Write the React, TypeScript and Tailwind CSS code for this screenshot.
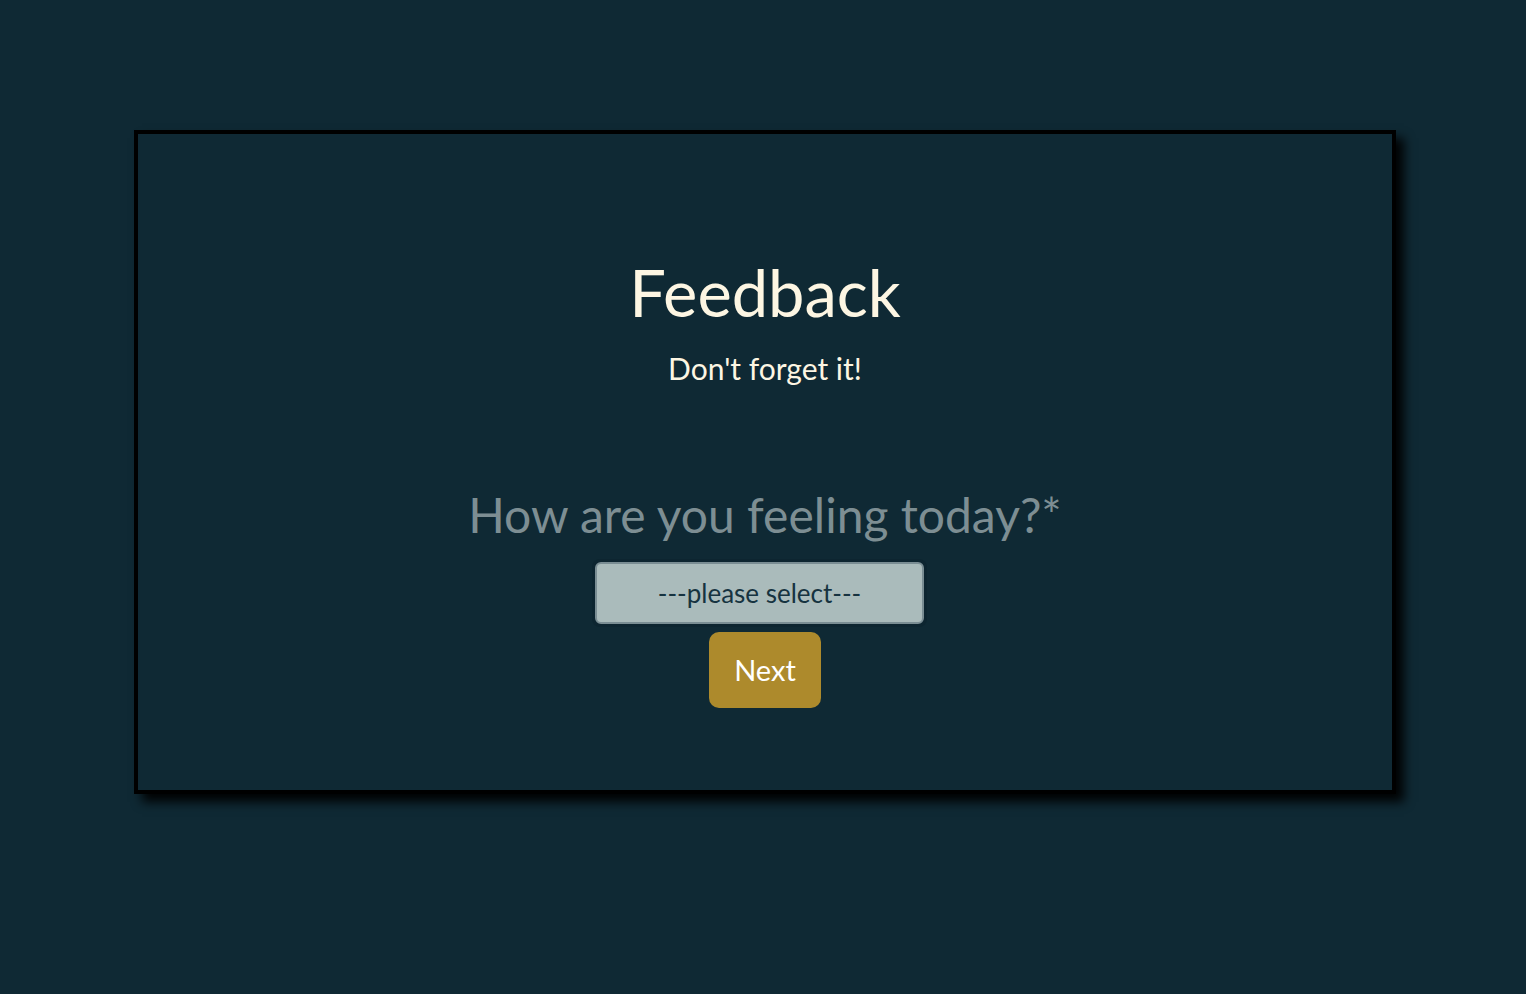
export default function App() {
  return (
    <div className="min-h-screen bg-[#0f2934] pt-[130px] pb-[200px] font-['Lato','Noto_Sans',sans-serif]">
      <div className="ml-[134px] w-[1262px] h-[664px] border-4 border-black bg-[#0f2934] shadow-[8px_8px_10px_rgba(0,0,0,0.95)] flex flex-col items-center">
        <h1 className="mt-[126px] text-[65px] leading-none text-[#fdf6e3]">Feedback</h1>
        <p className="mt-[28px] text-[30px] leading-none text-[#fdf6e3]">Don't forget it!</p>
        <label htmlFor="mood" className="mt-[108px] text-[48px] leading-none text-[#7d8e93]">
          How are you feeling today?*
        </label>
        <div className="mt-[20px] mr-[11px] rounded-[8px] p-[3px] bg-[#0d2530]">
          <select
            id="mood"
            defaultValue=""
            className="block w-[329px] h-[62px] appearance-none rounded-[6px] border-2 border-[#7a8d93] bg-[#aabbbb] text-[26px] text-[#163340] text-center [text-align-last:center] outline-none"
          >
            <option value="">---please select---</option>
            <option value="good">Good</option>
            <option value="okay">Okay</option>
            <option value="bad">Bad</option>
          </select>
        </div>
        <button
          type="button"
          className="mt-[5px] w-[112px] h-[76px] rounded-[10px] bg-[#ad8a2c] text-[29px] text-white"
        >
          Next
        </button>
      </div>
    </div>
  );
}
